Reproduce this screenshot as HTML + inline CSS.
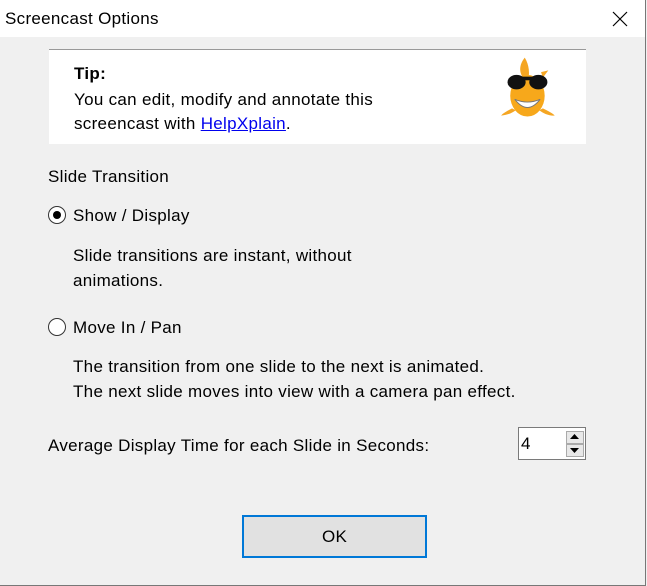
<!DOCTYPE html>
<html><head><style>
body{margin:0;width:647px;height:586px;overflow:hidden;background:#f0f0f0;font-family:"Liberation Sans",sans-serif;font-size:17px;letter-spacing:0.3px;color:#000;position:relative}
.win{position:absolute;left:0;top:0;width:645px;height:585px;border-right:1px solid #777;border-bottom:1px solid #777;}
.title{position:absolute;left:0;top:0;width:645px;height:37px;background:#fff}
.t{position:absolute;white-space:nowrap}
.tip{position:absolute;left:49px;top:49px;width:537px;height:94px;background:#fff;border-top:1px solid #999}
.radio{position:absolute;width:16px;height:16px;border:1px solid #333;border-radius:50%;background:#fff}
.dot{position:absolute;left:4px;top:4px;width:8px;height:8px;border-radius:50%;background:#000}
</style></head><body>
<div class="win"></div>
<div class="title"></div>
<div class="t" style="left:5px;top:9px;font-size:17px">Screencast Options</div>
<svg style="position:absolute;left:612px;top:11px" width="16" height="16"><path d="M1 1L15 15M15 1L1 15" stroke="#000" stroke-width="1.2"/></svg>
<div class="tip">
<div class="t" style="left:25px;top:14px;font-weight:bold">Tip:</div>
<div class="t" style="left:25px;top:38px;line-height:24px">You can edit, modify and annotate this<br>screencast with <span style="color:#0000ee;text-decoration:underline">HelpXplain</span>.</div>
<svg style="position:absolute;left:446px;top:4px" width="64" height="68" viewBox="0 0 65 75">
<path d="M30 4C22 14 24 24 33 32C36 22 35 12 30 4Z" fill="#f5a623"/>
<path d="M48 20L56 18L50 26Z" fill="#f5a623"/>
<ellipse cx="33" cy="46" rx="19" ry="23" fill="#f7a81b"/>
<path d="M16 60C10 63 5 66 4 68C12 67 16 65 20 62Z M50 60C56 63 62 66 63 68C55 68 50 65 46 62Z" fill="#f5a623"/>
<ellipse cx="21" cy="31" rx="10" ry="8" fill="#111"/><ellipse cx="45" cy="31" rx="10" ry="8" fill="#111"/>
<rect x="18" y="25" width="30" height="4" fill="#111"/>
<path d="M19 50Q33 68 47 50Q33 56 19 50Z" fill="#fff" stroke="#777" stroke-width="1"/>
</svg>
</div>
<div class="t" style="left:48px;top:167px">Slide Transition</div>
<div class="radio" style="left:48px;top:206px"><div class="dot"></div></div>
<div class="t" style="left:73px;top:206px">Show / Display</div>
<div class="t" style="left:73px;top:243px;line-height:25px">Slide transitions are instant, without<br>animations.</div>
<div class="radio" style="left:48px;top:318px"></div>
<div class="t" style="left:73px;top:318px">Move In / Pan</div>
<div class="t" style="left:73px;top:354px;line-height:25px">The transition from one slide to the next is animated.<br>The next slide moves into view with a camera pan effect.</div>
<div class="t" style="left:48px;top:436px">Average Display Time for each Slide in Seconds:</div>
<div style="position:absolute;left:518px;top:427px;width:66px;height:31px;border:1px solid #7a7a7a;background:#fff">
<div class="t" style="left:2px;top:6px">4</div>
<div style="position:absolute;left:47px;top:3px;width:16px;height:11px;border:1px solid #aaa;background:#e8e8e8"></div>
<div style="position:absolute;left:47px;top:16px;width:16px;height:11px;border:1px solid #aaa;background:#e8e8e8"></div>
<svg style="position:absolute;left:50px;top:5px" width="12" height="22"><path d="M1 6L5.5 1L10 6Z M1 15L5.5 20L10 15Z" fill="#000"/></svg>
</div>
<div style="position:absolute;left:242px;top:515px;border:2px solid #0078d7;background:#e1e1e1;width:181px;height:39px"></div>
<div class="t" style="left:322px;top:527px">OK</div>
</body></html>
